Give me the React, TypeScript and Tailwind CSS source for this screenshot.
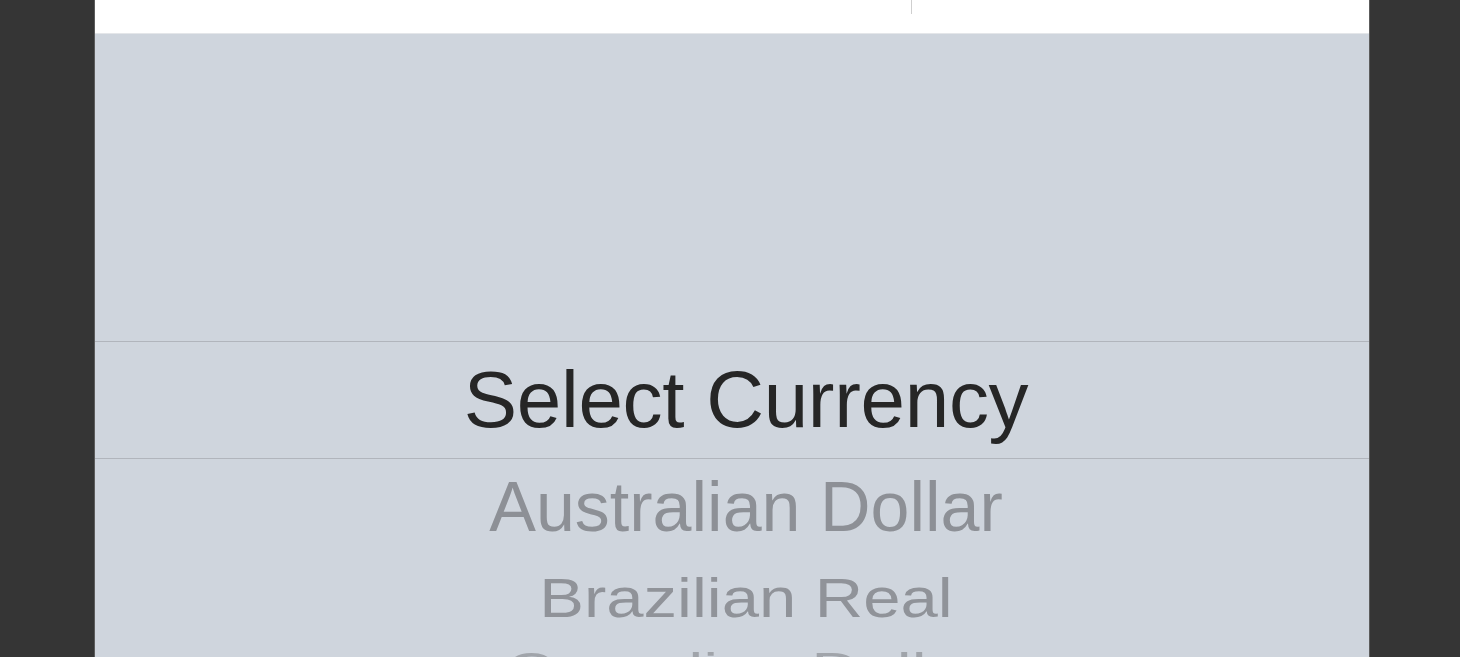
import React from "react";

export default function App() {
  return (
    <div
      className="flex h-[657px] w-full overflow-hidden bg-[#353535] pl-[94px]"
      style={{ fontFamily: '"Liberation Sans", Arial, sans-serif' }}
    >
      <div className="flex h-full w-[1276px] flex-col border-x border-[#5c5c5c] bg-[#cfd5dd]">
        <div className="flex h-[34px] shrink-0 border-b border-[#e4e6e9] bg-white">
          <div className="w-[816px]" />
          <div className="h-[14px] w-px bg-[#cfcfcf]" />
        </div>
        <div className="h-[307px] shrink-0" />
        <div className="flex h-[118px] shrink-0 items-center justify-center border-y border-[#b1b5bc] pl-[28px]">
          <span className="text-[80px] leading-[116px] tracking-[-0.3px] text-[#262626]">Select Currency</span>
        </div>
        <div className="flex h-[96px] shrink-0 justify-center pl-[28px]">
          <span className="text-[70px] leading-[96px] text-[#8d9096]">Australian Dollar</span>
        </div>
        <div className="flex h-[86px] shrink-0 justify-center pl-[28px]">
          <span className="origin-center scale-y-[0.84] text-[67px] leading-[86px] text-[#909399]">
            Brazilian Real
          </span>
        </div>
        <div className="flex h-[60px] shrink-0 justify-center pl-[28px]">
          <span className="-mt-[5px] origin-center scale-y-[0.65] text-[67px] leading-[67px] text-[#a0a4aa]">
            Canadian Dollar
          </span>
        </div>
      </div>
    </div>
  );
}
